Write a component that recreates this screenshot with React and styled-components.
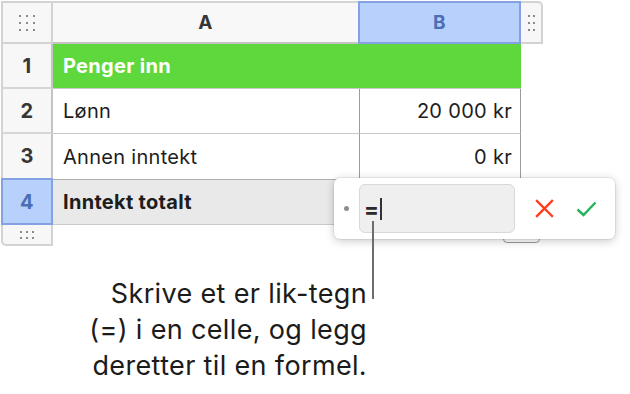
import React from 'react';
import styled, { createGlobalStyle } from 'styled-components';

const GlobalStyle = createGlobalStyle`
  html, body {
    margin: 0;
    padding: 0;
    background: #ffffff;
  }
  body {
    font-family: Inter, "Noto Sans", "Liberation Sans", sans-serif;
    color: #1d1d1d;
  }
`;

const Page = styled.div`
  position: relative;
  width: 630px;
  height: 394px;
  padding: 1px 0 0 1px;
  box-sizing: border-box;
  overflow: hidden;
`;

const Sheet = styled.div`
  display: grid;
  grid-template-columns: 52px 307px 161px 22px;
  grid-template-rows: 43px 45px 45px 46px 45px 21px;
  width: 542px;
`;

const Cell = styled.div`
  box-sizing: border-box;
  display: flex;
  align-items: center;
  font-size: 20px;
  letter-spacing: 0.3px;
  border-right: ${({ $noRight }) => ($noRight ? 'none' : '1px solid #c9c9c9')};
  border-bottom: 1px solid #c9c9c9;
`;

const Corner = styled(Cell)`
  background: #f7f7f7;
  border: 2px solid #d3d3d3;
  justify-content: center;
`;

const ColHead = styled(Cell)`
  justify-content: center;
  font-weight: 700;
  font-size: 19px;
  background: ${({ $active }) => ($active ? '#b7d1fc' : '#f8f8f8')};
  color: ${({ $active }) => ($active ? '#4c6fb4' : '#363636')};
  border-top: 2px solid ${({ $active }) => ($active ? '#84a2e2' : '#d3d3d3')};
  border-bottom: 2px solid ${({ $active }) => ($active ? '#84a2e2' : '#c4c4c4')};
  border-right: 2px solid ${({ $active }) => ($active ? '#84a2e2' : '#d3d3d3')};
  border-left: ${({ $active }) => ($active ? '2px solid #84a2e2' : 'none')};
  margin-left: ${({ $active }) => ($active ? '-2px' : '0')};
`;

const ColHandle = styled(Cell)`
  justify-content: center;
  background: #f7f7f7;
  border: 2px solid #d3d3d3;
  border-left: none;
  border-top-right-radius: 5px;
`;

const RowHead = styled(Cell)`
  justify-content: center;
  font-weight: 700;
  font-size: 20px;
  background: ${({ $active }) => ($active ? '#b7d1fc' : '#f7f7f7')};
  color: ${({ $active }) => ($active ? '#4c6fb4' : '#363636')};
  border-left: 2px solid ${({ $active }) => ($active ? '#84a2e2' : '#d3d3d3')};
  border-right: 2px solid ${({ $active }) => ($active ? '#84a2e2' : '#c4c4c4')};
  border-bottom: ${({ $active }) => ($active ? '2px solid #84a2e2' : '2px solid #d6d6d6')};
  ${({ $active }) => ($active ? 'border-top: 2px solid #84a2e2; margin-top: -2px;' : '')}
`;

const RowHandle = styled(Cell)`
  justify-content: center;
  background: #f7f7f7;
  border: 2px solid #d3d3d3;
  border-top: none;
  border-bottom-left-radius: 5px;
`;

const DataCell = styled(Cell)`
  padding: 0 8px 0 10px;
  justify-content: ${({ $right }) => ($right ? 'flex-end' : 'flex-start')};
  font-weight: ${({ $bold }) => ($bold ? 700 : 400)};
  color: ${({ $title }) => ($title ? '#ffffff' : '#1d1d1d')};
  background: ${({ $bg }) => $bg || '#ffffff'};
  border-right-color: #9c9c9c;
  border-bottom-color: ${({ $dark }) => ($dark ? '#b0b0b0' : '#c9c9c9')};
  grid-column: ${({ $span }) => ($span ? `span ${$span}` : 'auto')};
`;

const Empty = styled.div``;

const DotGrid = styled.div`
  display: grid;
  grid-template-columns: repeat(${({ $cols }) => $cols}, 2px);
  grid-auto-rows: 2px;
  column-gap: ${({ $gap }) => $gap}px;
  row-gap: ${({ $rgap }) => $rgap}px;
`;

const Dot = styled.span`
  width: 2px;
  height: 2px;
  background: #8a8a8a;
`;

const Dots = ({ cols, rows, gap, rgap }) => (
  <DotGrid $cols={cols} $gap={gap} $rgap={rgap}>
    {Array.from({ length: cols * rows }).map((_, i) => (
      <Dot key={i} />
    ))}
  </DotGrid>
);

const ResizeTab = styled.div`
  position: absolute;
  left: 503px;
  top: 222px;
  width: 37px;
  height: 21px;
  box-sizing: border-box;
  border: 1px solid #9a9a9a;
  border-radius: 4px;
  background: #ffffff;
`;

const Popover = styled.div`
  position: absolute;
  left: 334px;
  top: 178px;
  width: 281px;
  height: 61px;
  box-sizing: border-box;
  background: #ffffff;
  border-radius: 6px;
  box-shadow: 0 0 0 1px rgba(0, 0, 0, 0.06), 0 2px 10px rgba(0, 0, 0, 0.22);
  display: flex;
  align-items: center;
  padding: 0 0 0 10px;
`;

const Bullet = styled.span`
  width: 5px;
  height: 5px;
  border-radius: 50%;
  background: #8e8e8e;
  margin-right: 10px;
`;

const Field = styled.div`
  width: 156px;
  height: 49px;
  box-sizing: border-box;
  background: #efefef;
  border: 1px solid #d9d9d9;
  border-radius: 6px;
  display: flex;
  align-items: center;
  padding-left: 4px;
  font-size: 22px;
  font-weight: 700;
  color: #2a2a2a;
`;

const Caret = styled.span`
  width: 2px;
  height: 22px;
  background: #333;
  margin-left: 1px;
`;

const Actions = styled.div`
  display: flex;
  align-items: center;
  gap: 22px;
  margin-left: 20px;
`;

const Leader = styled.div`
  position: absolute;
  left: 372px;
  top: 221px;
  width: 2px;
  height: 78px;
  background: #6d6d6d;
`;

const Caption = styled.p`
  margin: 30px 0 0 0;
  width: 366px;
  text-align: right;
  font-size: 27px;
  letter-spacing: 0.35px;
  line-height: 36px;
  color: #1b1b1b;
`;

const rows = [
  { n: 1, a: 'Penger inn', title: true },
  { n: 2, a: 'Lønn', b: '20 000 kr' },
  { n: 3, a: 'Annen inntekt', b: '0 kr' },
  { n: 4, a: 'Inntekt totalt', footer: true },
];

export default function App() {
  return (
    <Page>
      <GlobalStyle />
      <Sheet>
        <Corner>
          <Dots cols={3} rows={3} gap={5} rgap={5} />
        </Corner>
        <ColHead>A</ColHead>
        <ColHead $active>B</ColHead>
        <ColHandle>
          <Dots cols={2} rows={3} gap={3} rgap={5} />
        </ColHandle>

        {rows.map((r) => (
          <React.Fragment key={r.n}>
            <RowHead $active={r.n === 4}>{r.n}</RowHead>
            {r.title ? (
              <DataCell $span={2} $bg="#5ed83c" $title $bold $noRight>
                {r.a}
              </DataCell>
            ) : (
              <>
                <DataCell $bold={r.footer} $bg={r.footer ? '#e9e9e9' : '#fff'} $dark={r.n === 3}>
                  {r.a}
                </DataCell>
                <DataCell $right $bg={r.footer ? '#e9e9e9' : '#fff'} $dark={r.n === 3}>
                  {r.b}
                </DataCell>
              </>
            )}
            <Empty />
          </React.Fragment>
        ))}

        <RowHandle>
          <Dots cols={3} rows={2} gap={4} rgap={4} />
        </RowHandle>
      </Sheet>

      <Caption>
        Skrive et er lik-tegn
        <br />
        (=) i en celle, og legg
        <br />
        deretter til en formel.
      </Caption>

      <ResizeTab />
      <Popover>
        <Bullet />
        <Field>
          =<Caret />
        </Field>
        <Actions>
          <svg width="19" height="19" viewBox="0 0 19 19">
            <path d="M2 2 L17 17 M17 2 L2 17" stroke="#ff3b1d" strokeWidth="2.4" strokeLinecap="square" fill="none" />
          </svg>
          <svg width="21" height="16" viewBox="0 0 21 16">
            <path d="M1.5 8.5 L7.5 14 L19.5 1.5" stroke="#27b25e" strokeWidth="2.4" fill="none" />
          </svg>
        </Actions>
      </Popover>
      <Leader />
    </Page>
  );
}
